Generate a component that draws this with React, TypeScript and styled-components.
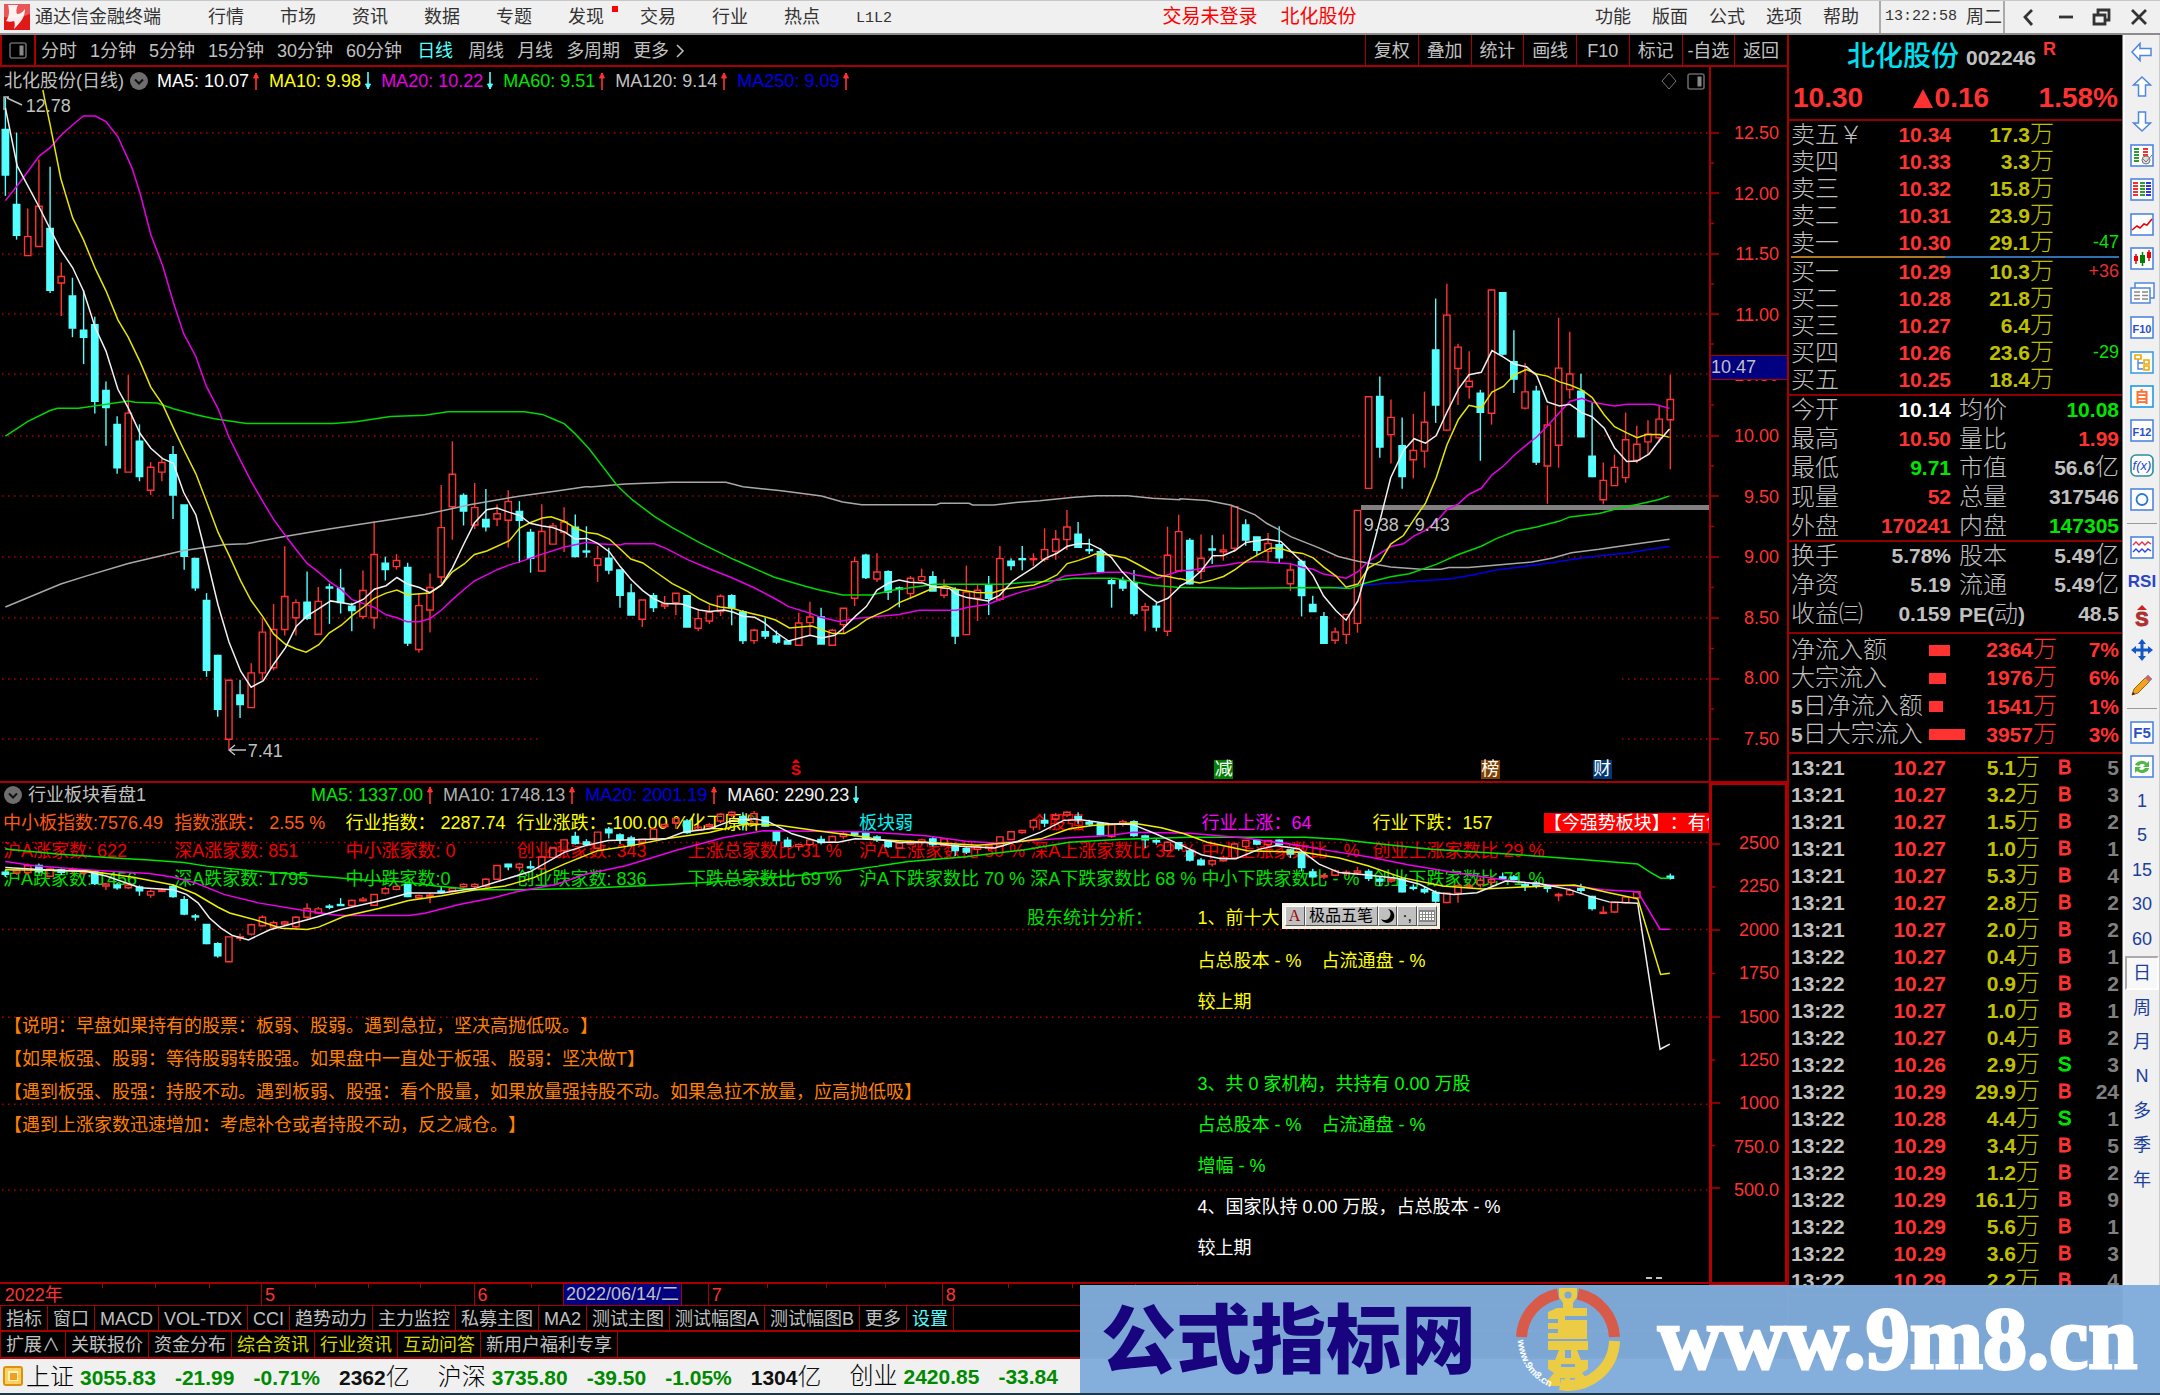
import React from "react";
import styled, { createGlobalStyle, css } from "styled-components";

const RED = "#ff3232";
const CYAN = "#54ffff";
const GREY = "#c0c0c0";
const LINE = "#a80000";
const YELLOW = "#c0c000";
const GREEN = "#00e600";

const Global = createGlobalStyle`
  * { box-sizing: border-box; }
  body {
    margin: 0;
    background: #000;
    color: ${GREY};
    font: 400 18px/20px "Liberation Sans", "Noto Sans CJK SC", sans-serif;
    white-space: nowrap;
    text-spacing-trim: space-all;
  }
  button {
    border: 0;
    padding: 0;
    background: none;
    color: inherit;
    font: inherit;
    cursor: pointer;
  }
  b { font-weight: 700; }
  table { border-collapse: collapse; border-spacing: 0; width: 100%; table-layout: fixed; }
  td, th { padding: 0; font-weight: inherit; text-align: left; }
  svg { display: block; overflow: visible; }
`;

/* ---------- chart data ---------- */

type Candle = [string, number, number, number, number];
type Scale = { x: number; y: number; kx: number; ky: number };

const PITCH = 11.174;
const FIRST = 5.4;

const parse = (s: Scale, text: string): Candle[] =>
  text
    .trim()
    .split(/\s+/)
    .map((row) => {
      const [a, b, c, d] = row.slice(1).split(",").map(Number);
      const f = (v: number) => s.y + v * s.ky;
      return [row[0], f(a), f(b), f(c), f(d)] as Candle;
    });

const path = (s: Scale, text: string) =>
  text
    .trim()
    .split(/\s+/)
    .map((p) => {
      const [x, y] = p.split(",").map(Number);
      return `${(s.x + x * s.kx).toFixed(1)},${(s.y + y * s.ky).toFixed(1)}`;
    })
    .join(" ");

const A: Scale = { x: 0, y: 90, kx: 0.3827, ky: 0.4337 };
const B: Scale = { x: 590, y: 380, kx: 0.3827, ky: 0.3333 };
const C: Scale = { x: 1180, y: 260, kx: 0.3954, ky: 0.3444 };
const D: Scale = { x: 0, y: 770, kx: 0.574, ky: 0.3333 };
const E: Scale = { x: 880, y: 770, kx: 0.574, ky: 0.3333 };

const dayCandles: Candle[] = [
  ...parse(A, `c18,91,196,244 c98,264,335,345 r273,338,382,382 r160,268,361,361 c177,319,462,468 r398,430,445,521
    c433,475,549,570 c462,554,570,632 c523,541,718,746 c672,693,732,820 c752,771,871,885 r657,745,881,881
    c771,810,891,902 r858,870,923,934 r850,859,881,902 c821,841,934,989 c957,957,1075,1106 c1080,1080,1148,1155
    c1160,1177,1338,1353 c1302,1304,1428,1445 r1360,1361,1497,1520 c1360,1395,1417,1448 r1322,1344,1424,1424
    r1218,1250,1344,1360 r1185,1244,1332,1338 r1052,1168,1244,1258 r1174,1182,1217,1258 c1110,1181,1218,1222
    r1146,1179,1255,1255 c1138,1146,1148,1231 c1104,1149,1182,1207 c1182,1190,1200,1248 r1108,1154,1214,1220
    r995,1071,1217,1242 c1076,1091,1106,1131 r1070,1085,1099,1106 c1090,1101,1275,1282 r1160,1189,1290,1297
    r1115,1147,1199,1251 r911,1009,1123,1138 r810,886,961,1037 c930,935,971,1004 r906,963,1003,1012
    c920,990,1007,1018 r956,977,989,1006 r923,949,992,1055 c948,972,992,1090 c1012,1020,1080,1113
    r955,1018,1109,1109 r998,1005,1047,1047 r962,996,1020,1065 c979,1008,1076,1078 c1006,1063,1065,1078`),
  ...parse(B, `r498,536,556,606 c503,535,570,583 c570,570,646,683 c611,639,705,705 r660,660,718,741 c639,647,683,696
    r648,672,678,687 r640,640,668,705 c647,647,741,741 r690,716,745,754 r676,697,723,732 r643,649,695,708
    c643,647,683,736 c690,696,782,792 r746,751,782,792 c714,755,768,777 c752,768,786,792 c783,783,792,792
    r698,729,796,796 r665,711,728,768 c683,711,792,792 r746,751,796,796 r685,685,734,760 r531,545,655,678
    c521,526,593,597 r520,576,597,606 c571,575,636,660 c620,624,626,682 r588,595,641,655 r566,590,602,608
    c574,590,633,633 r598,625,646,655 c622,629,768,792 r557,636,764,764 r614,631,655,723 c588,614,655,705
    r498,536,658,664 c535,544,557,571 c498,536,538,571 r520,536,538,558 r445,509,538,545 r450,478,514,539
    r390,441,479,510 c426,463,502,502 c476,509,512,522 c505,515,575,575 c597,602,611,683 c590,602,624,633
    c570,608,701,707 r670,680,690,754 c668,679,741,754 r440,526,754,768 r404,455,573,575`),
  ...parse(C, `c808,814,940,942 r797,866,904,927 c799,839,842,883 r797,842,847,873 r716,716,837,848 c753,769,813,830
    c804,804,843,857 r793,823,846,875 c773,827,865,880 r880,900,940,961 c870,875,974,1035 c975,1000,1021,1021
    c1022,1036,1113,1115 r1067,1080,1104,1115 r1029,1029,1087,1115 r727,727,1055,1082 r397,397,663,663
    c338,396,543,574 r405,457,507,591 c457,539,629,664 r447,553,580,634 r382,471,555,603 c112,261,421,473
    r69,160,494,497 r243,253,315,421 r265,352,368,403 c377,387,442,583 r85,87,445,478 c94,95,273,277
    c204,295,346,386 r299,383,430,434 c365,381,587,595 r422,479,598,708 r168,314,538,603 r208,331,376,403
    c330,381,513,513 c415,570,629,631 r588,640,696,709 r565,602,655,656 r443,522,632,647 r481,535,581,590
    r465,506,528,563 r424,462,516,530 r333,405,464,608`),
];

const dayLines: [string, string][] = [
  ["#a8a8a8", path(A, "14,1192 159,1139 220,1122 335,1092 480,1062 590,1048 645,1046 740,1030 860,1012 980,996 1110,979 1230,956 1360,936 1450,925 1530,915 1541,915") + " " +
    path(B, "0,321 92,312 212,307 355,307 400,320 500,332 605,348 660,366 710,374 905,374 915,370 990,370 1000,375 1055,375 1120,367 1175,362 1265,352 1325,347 1405,347 1470,355 1541,359") + " " +
    path(C, "0,693 69,698 130,712 190,740 220,765 250,783 280,803 350,835 400,861 450,875 533,891 610,898 660,898 680,893 730,893 810,885 890,877 940,866 990,850 1060,840 1130,828 1238,811")],
  ["#0000e6", path(C, "390,951 430,947 480,943 530,938 600,932 680,926 740,915 800,900 860,891 940,879 990,870 1060,859 1130,851 1190,840 1238,832")],
  ["#00d800", path(A, "14,798 73,764 131,739 150,734 205,734 265,726 335,717 353,720 410,722 453,735 512,749 560,758 645,769 870,769 930,765 1020,753 1110,750 1170,742 1370,742 1417,748 1444,758 1475,770 1503,793 1534,822") + " " +
    path(B, "0,210 72,318 110,359 168,409 215,443 290,490 375,538 480,591 560,618 600,630 660,645 735,645 790,631 900,613 1080,613 1130,608 1190,605 1265,595 1370,595 1400,601 1470,616 1541,623") + " " +
    path(C, "0,951 153,953 380,951 430,954 470,938 533,920 580,911 648,884 704,855 762,831 800,809 850,787 902,775 960,758 986,746 1060,736 1110,721 1130,716 1156,710 1210,696 1238,685")],
  ["#e600e6", path(A, "14,255 45,221 73,188 103,152 131,133 159,105 190,80 218,60 249,60 277,73 308,108 335,160 345,180 366,238 394,333 425,405 453,490 480,562 512,615 539,683 570,735 598,800 629,855 656,902 688,951 715,990 746,1028 774,1060 802,1091 833,1112 860,1133 892,1152 920,1175 978,1193 1009,1210 1037,1217 1064,1226 1096,1226 1123,1219 1154,1199 1182,1175 1213,1151 1240,1132 1272,1118 1299,1106 1331,1095 1358,1088 1417,1070 1475,1054 1534,1043") + " " +
    path(B, "20,491 79,495 90,491 168,491 200,506 255,539 313,567 372,594 430,624 485,657 519,680 575,700 605,713 650,725 695,716 750,710 808,704 860,691 957,691 985,683 1043,672 1085,652 1130,635 1190,616 1240,588 1290,583 1350,577 1400,577 1430,586 1482,595 1540,573") + " " +
    path(C, "0,902 26,902 53,896 83,889 110,887 150,879 180,876 210,876 240,879 280,882 310,893 337,898 363,912 420,924 450,905 477,875 507,851 533,832 565,824 592,801 621,785 648,760 675,725 704,708 731,680 762,663 789,624 818,598 845,567 876,537 902,514 929,482 960,443 986,410 1016,402 1042,413 1099,424 1130,419 1200,419 1238,431")],
  ["#e6e600", path(A, "112,0 116,18 131,80 159,204 190,295 218,345 249,412 277,463 308,530 335,570 366,627 394,685 425,725 453,779 480,829 512,885 539,948 570,1020 598,1072 629,1132 656,1177 688,1216 715,1254 746,1278 774,1289 800,1296 833,1279 860,1252 892,1234 920,1212 950,1192 978,1172 1009,1160 1037,1153 1064,1164 1123,1160 1154,1142 1182,1111 1213,1093 1240,1071 1272,1063 1331,1039 1358,1010 1385,998 1417,987 1440,984 1475,995 1503,1010 1534,1020") + " " +
    path(B, "20,462 51,478 79,507 107,537 138,549 168,573 215,611 255,634 285,656 313,672 340,681 375,686 400,695 450,708 485,720 521,744 580,738 605,749 635,761 665,761 695,741 722,719 750,704 780,689 808,668 850,648 900,623 930,618 957,628 1010,638 1050,639 1085,627 1160,615 1190,602 1220,585 1247,551 1275,542 1305,530 1320,522 1362,525 1400,534 1430,552 1482,585 1510,590 1540,597") + " " +
    path(C, "0,925 26,933 50,938 83,929 110,919 140,898 167,875 195,857 230,836 255,838 280,847 310,852 337,865 363,891 394,917 420,950 450,941 477,894 507,875 533,825 565,800 592,753 621,706 648,632 675,537 704,463 731,422 762,430 789,384 818,367 845,334 876,318 902,331 929,337 960,354 986,363 1016,377 1042,399 1073,450 1099,484 1130,502 1156,516 1180,507 1212,507 1238,515")],
  ["#f0f0f0", path(A, "14,41 45,175 103,271 131,320 159,369 190,410 218,463 249,548 277,602 308,690 335,733 366,792 394,826 425,850 453,861 480,928 512,980 539,1075 570,1188 598,1272 629,1340 656,1377 688,1362 715,1324 746,1286 774,1237 802,1213 833,1196 864,1178 920,1186 950,1174 978,1151 1009,1143 1037,1124 1064,1139 1096,1147 1123,1159 1154,1141 1182,1102 1213,1045 1240,998 1272,968 1299,964 1331,974 1358,981 1385,999 1417,1005 1444,1009 1475,1019 1503,1035 1534,1034") + " " +
    path(B, "20,490 51,516 79,560 107,598 138,632 168,657 195,671 240,672 285,690 313,695 350,690 375,697 400,709 430,712 455,728 485,756 519,783 575,766 605,774 640,766 662,745 695,707 722,680 750,630 780,609 808,600 835,607 870,609 900,621 940,626 957,642 985,653 1040,663 1070,646 1105,603 1160,562 1190,535 1220,520 1247,499 1275,491 1305,491 1335,508 1362,532 1390,575 1420,610 1450,640 1482,668 1510,655 1540,622") + " " +
    path(C, "0,947 26,930 53,903 83,859 110,858 140,843 167,820 220,811 255,817 280,845 310,878 337,917 363,975 394,1018 420,1046 450,990 477,880 507,750 533,632 565,554 592,519 621,532 648,510 675,442 704,375 731,333 762,326 789,263 818,282 845,302 876,310 902,335 929,412 960,424 986,419 1016,443 1042,455 1073,488 1099,545 1130,585 1156,584 1186,564 1212,525 1238,491")],
];

const sectorCandles: Candle[] = [
  ...parse(D, `c298,304,310,318 r296,300,306,312 r278,285,305,312 c278,284,303,308 r290,294,316,318 c292,297,304,312
    r290,296,300,310 r296,300,305,315 c300,303,338,342 r335,339,345,357 c335,342,350,356 r336,342,350,354
    c343,348,359,374 r356,361,372,380 r352,358,361,363 c340,346,376,380 c375,386,428,432 c428,434,436,448
    c458,459,516,518 c512,516,552,558 r494,496,570,571 r486,496,500,508 r457,460,488,492 r432,438,463,466
    r448,454,467,471 r449,452,458,463 r435,438,466,471 r396,412,438,442 r407,413,425,427 c399,405,408,414
    c381,400,403,404 r385,388,403,406 r378,384,389,391 r369,370,402,404 r347,353,366,370 r343,346,355,358
    c338,341,376,378 r370,374,380,383 r366,372,376,396 c346,360,364,368 r349,352,359,364 r337,340,347,350
    r337,340,346,350 r322,325,345,350 r283,284,325,327 c279,280,288,298 r276,280,290,301 c270,288,290,296
    r257,259,294,296 r230,232,260,262 r207,208,240,243 c184,198,218,222 c206,214,222,226 r184,185,233,236
    c170,176,187,204 c188,193,207,220 c196,202,224,228 r203,206,215,220 r174,176,204,207 r159,162,168,172
    r140,144,158,176 c146,152,186,190 r162,170,178,182 r158,163,168,172 r128,132,152,158 r124,126,134,140
    c126,138,160,180 r122,130,160,165 c138,140,167,169 c180,184,210,222 c200,209,227,230 r218,222,228,240
    r205,208,222,226 c196,207,216,222 r196,198,214,217 r185,190,198,206 c182,187,192,198 c185,188,204,208
    c194,199,208,214 c210,213,228,232 r215,218,232,233 r208,212,220,224 r204,208,214,222 c200,205,222,228
    r203,205,225,228 c222,224,240,256 c230,234,244,250 r222,228,236,248 r222,226,232,238 r198,199,227,230
    r184,184,207,209 r178,180,186,190 r145,150,170,180 c130,150,158,170 r128,135,146,150 r124,126,134,140
    c126,138,146,160 c148,156,161,166 c158,160,193,195 r160,163,198,202 r148,154,162,168 c150,154,195,199
    c193,196,208,232 c206,210,214,222 r212,215,240,243 c214,216,234,240 c238,241,268,272 c262,268,282,284
    r266,270,280,287 r255,260,270,272 r215,220,262,265 r208,210,228,232 c208,210,220,224 r208,210,222,230
    c207,209,222,225 c235,238,250,262 c242,245,290,302 c294,303,318,320 r308,314,318,324 r295,300,313,316
    r298,304,308,315 r288,300,305,312 c295,302,322,330 c318,325,330,345 r320,325,330,335 c322,324,362,364
    c340,349,352,358 c347,355,362,368 c358,364,390,395 r364,366,394,396 r340,344,366,395 r338,344,348,352
    r320,328,340,350 r320,326,334,350 c305,318,322,328 c312,318,326,334 c336,340,346,360 c330,336,346,352
    c340,344,352,364 r365,370,374,390 r352,358,370,374 c338,352,358,369 c374,376,412,418 r405,423,425,426
    r393,394,422,424 r374,378,395,398 r360,362,380,384 x0,0,0,0 x0,0,0,0 c308,316,322,326`),
];

const sectorLines: [string, string][] = [
  ["#00e600", path(D, "9,235 100,250 200,262 260,268 320,275 360,286 440,300 530,312 640,328 700,332 760,345 830,356 900,356 1020,352 1140,343 1250,332 1400,312 1480,298 1530,286") + " " +
    path(E, "0,285 50,272 150,258 250,238 330,215 420,206 540,200 740,200 800,206 860,218 960,236 1080,248 1200,263 1320,280 1340,302 1360,322 1376,322")],
  ["#f000f0", path(D, "9,272 60,285 150,297 260,308 300,318 340,335 390,370 450,395 530,418 590,433 712,433 740,426 800,400 860,380 900,362 970,340 1020,310 1090,285 1180,238 1260,202 1330,181 1500,184") + " " +
    path(E, "0,187 80,196 150,212 200,217 260,211 330,202 400,195 440,185 540,188 640,203 720,222 790,242 850,258 920,282 1000,305 1080,325 1150,340 1210,345 1260,356 1320,362 1359,473 1376,473")],
  ["#f0f000", path(D, "9,297 150,300 185,308 230,318 302,342 340,368 380,408 400,425 450,448 490,470 535,474 555,467 600,435 660,412 712,388 770,374 828,356 880,345 930,320 983,280 1041,240 1100,225 1160,205 1236,186 1300,160 1360,165 1430,182 1510,200") + " " +
    path(E, "0,208 80,215 170,224 230,216 280,205 330,175 370,165 440,158 490,172 530,190 570,215 640,240 740,245 800,262 850,285 910,320 980,345 1050,354 1120,348 1210,342 1270,365 1320,383 1360,608 1376,604")],
  ["#f0f0f0", path(D, "9,290 68,296 150,302 185,315 244,350 302,356 325,370 345,395 365,440 385,470 405,492 433,505 470,475 535,445 594,415 672,385 712,366 770,366 828,352 870,330 924,302 983,245 1020,225 1060,210 1160,205 1190,185 1236,175 1276,150 1315,145 1340,155 1380,190 1430,215 1460,215 1490,205") + " " +
    path(E, "0,208 35,216 80,216 133,226 200,232 240,212 280,185 320,150 350,148 400,160 440,162 480,190 520,220 560,252 595,264 620,264 660,236 690,225 730,235 765,280 800,305 850,312 900,322 940,340 970,365 1000,370 1040,365 1090,330 1150,338 1200,355 1240,378 1270,392 1320,396 1359,830 1376,815")],
];

const dayGrid = [133, 193, 254, 314, 374, 436, 496, 557, 618, 679, 739];
const sectorGrid = [842, 928, 1015, 1101, 1186];

/* ---------- page frame ---------- */

const Page = styled.div`
  min-height: 100vh;
  display: flex;
  flex-direction: column;
  position: relative;
  overflow: hidden;
`;

const MenuBar = styled.header`
  height: 35px;
  display: flex;
  align-items: center;
  padding: 0 10px 0 4px;
  background: #f0f0f0;
  border-top: 1px solid #c8c8c8;
  border-bottom: 2px solid #8c8c8c;
  color: #333;
`;

const Title = styled.div`
  display: flex;
  align-items: center;
  gap: 5px;
  width: 204px;
`;

const Menu = styled.nav<{ $gap: number }>`
  display: flex;
  gap: ${(p) => p.$gap}px;
`;

const MenuItem = styled.button<{ $dot?: boolean }>`
  position: relative;
  min-width: 36px;
  ${(p) =>
    p.$dot &&
    css`
      &::after {
        content: "";
        position: absolute;
        right: -14px;
        top: 0;
        width: 6px;
        height: 6px;
        background: #f00;
      }
    `}
`;

const Mono = styled.span`
  font-family: "Liberation Mono", "Noto Sans CJK SC", monospace;
  font-size: 15px;
`;

const Notice = styled.div`
  flex: 1;
  display: flex;
  justify-content: center;
  gap: 23px;
  color: #f00;
  font-size: 19px;
  padding-left: 32px;
`;

const Clock = styled.div`
  display: flex;
  align-items: center;
  gap: 9px;
  height: 32px;
  margin-left: 20px;
  padding: 0 4px;
  border-left: 2px solid #aaa;
  border-right: 2px solid #aaa;
  width: 126px;
`;

const WindowButtons = styled.div`
  display: flex;
  align-items: center;
  justify-content: space-between;
  width: 132px;
  margin-left: 13px;
`;

const Body = styled.div`
  flex: 1;
  display: grid;
  grid-template-columns: minmax(0, 1fr) 336px 37px;
  min-height: 0;
`;

const Main = styled.main`
  display: flex;
  flex-direction: column;
  min-width: 0;
`;

const Toolbar = styled.div`
  height: 32px;
  display: flex;
  border-bottom: 2px solid ${LINE};
`;

const PaneToggle = styled.button`
  width: 36px;
  display: grid;
  place-items: center;
  border-left: 2px solid ${LINE};
  border-right: 2px solid ${LINE};
  margin-right: 5px;
`;

const Periods = styled.div`
  flex: 1;
  display: flex;
  align-items: center;
  gap: 13px;
  padding-top: 2px;
`;

const Period = styled.button<{ $on?: boolean }>`
  display: flex;
  align-items: center;
  gap: 7px;
  color: ${(p) => (p.$on ? CYAN : "inherit")};
  padding: 0 ${(p) => (p.$on ? 2 : 0)}px;
`;

const Tools = styled.div`
  display: grid;
  grid-template-columns: repeat(8, 1fr);
  width: 422px;
  button {
    border-left: 1px solid ${LINE};
    padding-top: 2px;
  }
`;

/* ---------- chart panes ---------- */

const Pane = styled.section<{ $h: number; $line?: boolean }>`
  flex: ${(p) => p.$h} 1 ${(p) => p.$h}px;
  min-height: 0;
  display: grid;
  grid-template-columns: minmax(0, 1fr) 78px;
  ${(p) => p.$line && `border-top: 2px solid ${LINE};`}
`;

const Canvas = styled.div`
  position: relative;
  display: grid;
  grid-template-rows: 100%;
  min-height: 0;
  overflow: hidden;
  > * {
    grid-area: 1 / 1;
    min-width: 0;
    min-height: 0;
  }
`;

const Plot = styled.svg`
  width: 100%;
  height: 100%;
  pointer-events: none;
  polyline,
  line,
  rect {
    vector-effect: non-scaling-stroke;
  }
`;

const Legend = styled.div<{ $h: number }>`
  display: flex;
  align-items: center;
  align-self: start;
  width: 100%;
  height: ${(p) => p.$h}px;
  padding-left: 4px;
`;

const LegendName = styled.button<{ $w?: number }>`
  display: flex;
  align-items: center;
  gap: 6px;
  ${(p) => p.$w && `width: ${p.$w}px;`}
`;

const LegendItem = styled.span<{ $c: string }>`
  display: flex;
  align-items: center;
  gap: 3px;
  width: max-content;
  margin-left: 9px;
  color: ${(p) => p.$c};
`;

const Corner = styled.div`
  display: flex;
  align-items: center;
  gap: 10px;
  margin-left: auto;
  padding-right: 4px;
`;

const Axis = styled.div<{ $top: number; $bottom: number; $frame?: boolean }>`
  position: relative;
  border-left: 2px solid ${LINE};
  display: grid;
  ${(p) => p.$frame && `border: 3px solid #b40000; border-top-width: 2px; border-right-width: 2px;`}
  > * {
    grid-area: 1 / 1;
  }
  ol {
    list-style: none;
    margin: 0;
    padding: ${(p) => p.$top}px ${(p) => (p.$frame ? 6 : 8)}px ${(p) => p.$bottom}px 0;
    display: flex;
    flex-direction: column;
    justify-content: space-between;
    text-align: right;
    color: ${RED};
  }
`;

const CursorPrice = styled.div`
  position: absolute;
  top: 288px;
  left: 0;
  right: 0;
  height: 25px;
  background: #000080;
  border-top: 1px solid ${LINE};
  border-bottom: 1px solid ${LINE};
  line-height: 22px;
`;

const Pin = styled.span<{ $x: number; $y: number; $bg?: string }>`
  position: absolute;
  left: ${(p) => p.$x}%;
  top: ${(p) => p.$y}%;
  ${(p) =>
    p.$bg &&
    css`
      background: ${p.$bg};
      color: #fff;
      width: 19px;
      height: 19px;
      line-height: 19px;
      text-align: center;
    `}
`;

const StatGrid = styled.div`
  display: grid;
  grid-template-columns: repeat(10, 1fr);
  grid-auto-rows: 28px;
  align-items: center;
  padding: 2px 0 0 3px;
  margin-right: -6px;
`;

const Cell = styled.span<{ $c: string; $fill?: boolean }>`
  color: ${(p) => p.$c};
  white-space: pre;
  width: 0;
  ${(p) =>
    p.$fill &&
    css`
      width: 100%;
      overflow: hidden;
      background: #f00;
    `}
`;

const Overlay = styled.div`
  display: flex;
  flex-direction: column;
`;

const Notes = styled.div`
  display: grid;
  grid-template-columns: 60% 10% 30%;
  line-height: 41px;
  padding-left: 4px;
  padding-top: 5px;
`;

const Advice = styled.div`
  margin-top: 112px;
  line-height: 33px;
  color: #ff8000;
`;

const Holder = styled.div<{ $c: string }>`
  color: ${(p) => p.$c};
  min-height: 41px;
  white-space: pre;
  &:first-child {
    padding-bottom: 2px;
  }
`;

const Ime = styled.div`
  position: absolute;
  left: 75%;
  top: 120px;
  width: 158px;
  height: 26px;
  display: flex;
  border: 3px solid #f4f2e2;
  background: #c0c0c0;
  color: #000;
`;

const ImeKey = styled.button<{ $grow?: number; $latin?: boolean }>`
  display: grid;
  place-items: center;
  border: 1px solid;
  border-color: #fff #555 #555 #fff;
  flex: ${(p) => p.$grow || 1};
  line-height: 18px;
  font-size: 16px;
  ${(p) => p.$latin && `color: #a00000; font-family: "Liberation Serif", serif;`}
`;

const DateAxis = styled.div`
  position: relative;
  height: 24px;
  border-top: 2px solid ${LINE};
  border-bottom: 1px solid ${LINE};
  color: ${RED};
  line-height: 22px;
`;

const DateMark = styled.span<{ $x: number; $line?: boolean; $box?: boolean }>`
  position: absolute;
  left: ${(p) => p.$x}%;
  top: 0;
  bottom: 0;
  padding-left: 3px;
  ${(p) => p.$line && `border-left: 1px solid ${LINE};`}
  ${(p) => p.$box && `background: #000080; color: ${GREY}; padding: 0 2px; border: 1px solid ${LINE}; border-width: 0 1px; line-height: 20px;`}
`;

const Tick = styled.i<{ $x: number }>`
  position: absolute;
  left: ${(p) => p.$x}%;
  top: 0;
  height: 4px;
  border-left: 1px solid ${LINE};
`;

const Tabs = styled.div<{ $h: number }>`
  height: ${(p) => p.$h}px;
  display: flex;
  border-bottom: 2px solid ${LINE};
  border-left: 1px solid ${LINE};
`;

const Tab = styled.button<{ $c?: string }>`
  padding: 1px 5px 0;
  border-right: 1px solid ${LINE};
  color: ${(p) => p.$c || "inherit"};
`;

/* ---------- quote panel ---------- */

const Quote = styled.aside`
  border-left: 2px solid ${LINE};
  border-right: 1px solid #808080;
  height: 100%;
  overflow: hidden;
  font-size: 24px;
  font-weight: 300;
  display: flex;
  flex-direction: column;
`;

const Block = styled.div<{ $top?: number; $pad: number }>`
  padding: ${(p) => p.$top || 0}px 3px ${(p) => p.$pad}px 2px;
  border-bottom: 2px solid #900000;
`;

const Head = styled.div`
  height: 86px;
  border-bottom: 2px solid #900000;
  padding: 4px 4px 0;
`;

const Name = styled.div`
  display: flex;
  align-items: center;
  justify-content: center;
  gap: 7px;
  height: 36px;
  padding-right: 8px;
  strong {
    font-size: 28px;
    color: #00e0f0;
    font-weight: 500;
  }
  b {
    font-size: 21px;
    padding-top: 2px;
  }
  sup {
    font-size: 18px;
    font-weight: bold;
    color: ${RED};
    align-self: flex-start;
    line-height: 20px;
    vertical-align: top;
  }
`;

const Price = styled.div`
  display: flex;
  justify-content: space-between;
  color: ${RED};
  font-size: 28px;
  font-weight: bold;
  line-height: 46px;
  span {
    display: flex;
    align-items: center;
    gap: 2px;
  }
`;

const Small = styled.b`
  font-size: 21px;
`;

const Col = styled.col<{ $w?: number }>`
  width: ${(p) => (p.$w ? p.$w + "px" : "auto")};
`;

const Row = styled.tr<{ $h: number }>`
  height: ${(p) => p.$h}px;
  line-height: ${(p) => p.$h}px;
`;

const Num = styled.td<{ $c?: string; $thin?: boolean; $left?: boolean }>`
  && {
    text-align: ${(p) => (p.$left ? "left" : "right")};
    font-weight: ${(p) => (p.$thin ? 400 : 700)};
  }
  color: ${(p) => p.$c || GREY};
  font-size: ${(p) => (p.$thin ? 18 : 21)}px;
  i {
    font: 300 24px "Noto Sans CJK SC", sans-serif;
    line-height: 20px;
  }
`;

const Side = styled.td<{ $c: string }>`
  && {
    padding-left: 18px;
  }
  color: ${(p) => p.$c};
  font-size: 20px;
  font-weight: 400;
  -webkit-text-stroke: 1px ${(p) => p.$c};
`;

const Balance = styled.div`
  height: 2px;
  background: linear-gradient(90deg, #b07820 47%, #3070b0 47%);
`;

const Stats = styled.div<{ $gap: number }>`
  display: grid;
  row-gap: ${(p) => p.$gap}px;
`;

const StatRow = styled.dl`
  margin: 0;
  height: 28px;
  line-height: 28px;
  display: grid;
  grid-template-columns: 72px 88px 80px 88px;
  dt {
    white-space: nowrap;
  }
  dt:nth-of-type(2) {
    padding-left: 8px;
  }
`;

const Value = styled.dd<{ $c?: string }>`
  margin: 0;
  text-align: right;
  font-size: 21px;
  font-weight: 700;
  color: ${(p) => p.$c || GREY};
  i {
    font: 300 24px "Noto Sans CJK SC", sans-serif;
    line-height: 20px;
  }
`;

const FlowRow = styled.div`
  height: 28px;
  line-height: 28px;
  display: grid;
  grid-template-columns: 138px 38px 1fr 62px;
  align-items: center;
`;

const Bar = styled.span`
  height: 11px;
  background: ${RED};
`;

/* ---------- side tools ---------- */

const Rail = styled.div`
  background: #f0f0f0;
  border-left: 2px solid #fafafa;
  border-right: 1px solid #ccc;
`;

const RailGroup = styled.div<{ $h: number }>`
  height: ${(p) => p.$h}px;
  display: grid;
  grid-auto-rows: 1fr;
`;

const RailSep = styled.hr`
  margin: 6px 2px;
  height: 1px;
  border: 0;
  background: #999;
`;

const RailButton = styled.button<{ $on?: boolean }>`
  display: grid;
  place-items: center;
  color: #1a3f9c;
  ${(p) => p.$on && `border: 2px solid; border-color: #aaa #fff #fff #aaa; background: #f8f8f8;`}
`;

const Rsi = styled.b`
  font-size: 17px;
  color: #2a44c8;
`;

/* ---------- bottom ---------- */

const Status = styled.footer`
  height: 36px;
  display: flex;
  align-items: center;
  padding-left: 3px;
  background: #f0f0f0;
  border-bottom: 2px solid #1d3a4c;
  color: #000;
  font-size: 24px;
`;

const Index = styled.div`
  display: flex;
  align-items: baseline;
  gap: 19px;
  margin: 0 25px 0 3px;
  font-size: 21px;
  font-weight: 700;
  color: #008a00;
  span:first-child {
    font-size: 24px;
    font-weight: 300;
    color: #000;
    margin-right: -13px;
  }
  em {
    color: #111;
    font-style: normal;
  }
  i {
    font: 300 24px "Noto Sans CJK SC", sans-serif;
    line-height: 20px;
  }
`;

const Banner = styled.div`
  position: absolute;
  right: 0;
  bottom: 2px;
  width: 1080px;
  height: 108px;
  display: flex;
  align-items: center;
  padding-left: 21px;
  background: rgba(128, 172, 220, 0.97);
`;

const BannerName = styled.div`
  width: 414px;
  padding-bottom: 8px;
  font: 900 75px/100px "Noto Sans CJK SC", sans-serif;
  color: #17047e;
`;

const BannerUrl = styled.a`
  margin-left: 37px;
  font: bold 88px/90px "Liberation Serif", serif;
  color: #fff;
  -webkit-text-stroke: 3px #fff;
  text-decoration: none;
`;

/* ---------- drawings ---------- */

const Candles = ({ data }: { data: Candle[] }) => (
  <g strokeWidth={1.4}>
    {data.map(([k, hi, top, bot, lo], i) => {
      if (k === "x") return null;
      const x = FIRST + PITCH * i;
      const c = k === "c" ? CYAN : RED;
      const h = Math.max(bot - top, 1);
      return (
        <g key={i} stroke={c} fill={k === "c" ? CYAN : "#000"}>
          <line x1={x} x2={x} y1={hi} y2={top} />
          <line x1={x} x2={x} y1={bot} y2={lo} />
          <rect x={x - 3.2} y={top} width={6.4} height={h} fillOpacity={k === "c" ? 1 : 0.5} />
        </g>
      );
    })}
  </g>
);

const Lines = ({ data }: { data: [string, string][] }) => (
  <g fill="none" strokeWidth={1.5}>
    {data.map(([c, p], i) => (
      <polyline key={i} points={p} stroke={c} />
    ))}
  </g>
);

const Grid = ({ ys }: { ys: number[] }) => (
  <g stroke="#b00000" strokeWidth={1.5} strokeDasharray="1.5 4.5">
    {ys.map((y) => (
      <line key={y} x1={2} x2={1709} y1={y} y2={y} />
    ))}
  </g>
);

const Ticks = ({ ys, view }: { ys: number[]; view: string }) => (
  <svg viewBox={view} width="10" height="100%" preserveAspectRatio="none">
    {ys.map((y, i) => (
      <g key={y} stroke="#b40000" strokeWidth="1.5">
        <line x1="0" x2="8" y1={y} y2={y} />
        {ys[i + 1] && <line x1="0" x2="3" y1={(y + ys[i + 1]) / 2} y2={(y + ys[i + 1]) / 2} />}
      </g>
    ))}
  </svg>
);

const Arrow = ({ up }: { up?: boolean }) => (
  <svg width="8" height="20" viewBox="0 0 8 20">
    <g stroke={up ? RED : CYAN} fill={up ? RED : CYAN} transform={up ? "" : "rotate(180 4 10)"}>
      <path d="M4 2v17" strokeWidth="1.6" />
      <path d="M4 2L1.5 7h5z" />
    </g>
  </svg>
);

const Drop = () => (
  <svg width="18" height="18" viewBox="0 0 18 18">
    <circle cx="9" cy="9" r="9" fill="#6e6e6e" />
    <path d="M5 7.5l4 4 4-4" fill="none" stroke="#111" strokeWidth="2" />
  </svg>
);

const PaneIcon = () => (
  <svg width="18" height="17" viewBox="0 0 18 17">
    <rect x="1" y="1" width="16" height="15" rx="2" fill="none" stroke="#666" strokeWidth="1.6" />
    <rect x="10.5" y="3.5" width="4" height="10" fill="#888" />
  </svg>
);

const Box = ({ children, c = "#4f86e0" }: { children?: React.ReactNode; c?: string }) => (
  <svg width="24" height="23" viewBox="0 0 24 23">
    <rect x="1" y="1" width="22" height="21" fill="#fff" stroke={c} strokeWidth="1.6" />
    {children}
  </svg>
);

const dashes = (x: number, c: string, n: number, gap: number) =>
  Array.from({ length: n }, (_, i) => <path key={x + "-" + i} d={`M${x} ${5 + i * gap}h5`} stroke={c} strokeWidth="1.6" />);

const BigArrow = ({ turn }: { turn: number }) => (
  <svg width="24" height="24" viewBox="0 0 24 24">
    <path d="M2 12L10 3.5v5h11v7H10v5z" fill="#fff" stroke="#4f86e0" strokeWidth="1.5" transform={`rotate(${turn} 12 12)`} />
  </svg>
);

const label = (t: string) => (
  <Box>
    <text x="12" y="17" fontSize={t.length > 2 ? 11 : 15} fontWeight="bold" textAnchor="middle" fill="#2a50c8">
      {t}
    </text>
  </Box>
);

const topTools: [string, React.ReactNode][] = [
  ["后退", <BigArrow turn={0} />],
  ["上翻", <BigArrow turn={90} />],
  ["下翻", <BigArrow turn={270} />],
  ["自选报价", <Box>{dashes(4, "#008000", 5, 3)}{dashes(13, "#e00", 3, 3)}<circle cx="16" cy="16" r="4" fill="#ddd" stroke="#777" /><path d="M13 15l3 3 6-7" fill="none" stroke="#777" /></Box>],
  ["行情列表", <Box>{dashes(3, "#e00", 5, 3)}{dashes(10, "#008000", 5, 3)}{dashes(16, "#00c", 5, 3)}</Box>],
  ["分时图", <Box><path d="M2 17l5-4 3 2 4-4 3 1 5-6" fill="none" stroke="#e00" strokeWidth="1.6" /></Box>],
  ["K线图", <Box><path d="M6 7v10M19 3v11" stroke="#e00" strokeWidth="1.5" /><path d="M12.5 5v14" stroke="#008000" strokeWidth="1.5" /><path d="M4 9h4v5H4zM17 5h4v6h-4z" fill="#e00" /><path d="M10 8h5v8h-5z" fill="#008000" /></Box>],
  ["多窗口", <svg width="25" height="23" viewBox="0 0 25 23"><rect x="5" y="1" width="19" height="15" fill="#fff" stroke="#4f86e0" strokeWidth="1.5" /><rect x="1" y="6" width="19" height="15" fill="#fff" stroke="#4f86e0" strokeWidth="1.5" />{[10, 13.5, 17].map((y) => <path key={y} d={`M4 ${y}h6M12 ${y}h6`} stroke="#888" strokeWidth="1.5" />)}</svg>],
  ["F10", label("F10")],
  ["结构树", <Box c="#3ba0e0"><path d="M8 7v11h5M8 12h5" fill="none" stroke="#4f86e0" strokeWidth="1.4" /><path d="M5 4h6v4H5zM14 9h5v4h-5zM14 15h5v4h-5z" fill="#fff" stroke="#f0a800" strokeWidth="1.6" /></Box>],
  ["自选", <Box c="#1e9be0"><text x="12" y="17" fontSize="15" fontWeight="bold" textAnchor="middle" fill="#ff7030">自</text></Box>],
  ["F12", label("F12")],
  ["公式", <svg width="24" height="23" viewBox="0 0 24 23"><rect x="1" y="1" width="22" height="21" rx="5" fill="#fff" stroke="#2a8f98" strokeWidth="1.6" /><text x="12" y="16" fontSize="13" fontStyle="italic" textAnchor="middle" fill="#2048d0">f(x)</text></svg>],
  ["圈选", <Box><circle cx="12" cy="11.5" r="5.5" fill="none" stroke="#2a78d0" strokeWidth="1.8" /></Box>],
];

const midTools: [string, React.ReactNode][] = [
  ["指标", <Box>{[9, 16].map((y) => <path key={y} d={`M3 ${y}l3-3 3 3 3-3 3 3 3-3 3 2`} fill="none" stroke={y > 9 ? "#3040e0" : "#e03050"} strokeWidth="1.4" />)}</Box>],
  ["RSI", <Rsi>RSI</Rsi>],
  ["特色", <svg width="20" height="24" viewBox="0 0 20 24"><path d="M5 6l5-5 5 5z" fill="#d02020" /><text x="10" y="22" fontSize="20" fontWeight="bold" textAnchor="middle" fill="#b03030" stroke="#b03030">S</text></svg>],
  ["移动", <svg width="24" height="24" viewBox="0 0 24 24"><path d="M12 1l4 5h-2.5v4.500H18V8l5 4-5 4v-2.500h-4.500V18H16l-4 5-4-5h2.500v-4.500H6V16l-5-4 5-4v2.500h4.500V6H8z" fill="#1458c8" /></svg>],
  ["画笔", <svg width="24" height="24" viewBox="0 0 24 24"><path d="M2 22l2-6L15 5l4 4L8 20z" fill="#f2a320" stroke="#a06010" /><path d="M15 5l3-3 4 4-3 3z" fill="#d86060" stroke="#999" /><path d="M2 22l1-3 2 2z" fill="#222" /></svg>],
];

const lowTools: [string, React.ReactNode][] = [
  ["F5", label("F5")],
  ["刷新", <Box><path d="M5 10a7 6 0 0 1 12-2l2-2v6h-6l2-2a4 4 0 0 0-6 1zM19 13a7 6 0 0 1-12 3l-2 2v-6h6l-2 2a4 4 0 0 0 6-1z" fill="#4fb848" /></Box>],
  ..."1 5 15 30 60 日 周 月 N 多 季 年".split(" ").map((t) => [t, t] as [string, React.ReactNode]),
];

const trades = `13:21 10.27 5.1 B 5
13:21 10.27 3.2 B 3
13:21 10.27 1.5 B 2
13:21 10.27 1.0 B 1
13:21 10.27 5.3 B 4
13:21 10.27 2.8 B 2
13:21 10.27 2.0 B 2
13:22 10.27 0.4 B 1
13:22 10.27 0.9 B 2
13:22 10.27 1.0 B 1
13:22 10.27 0.4 B 2
13:22 10.26 2.9 S 3
13:22 10.29 29.9 B 24
13:22 10.28 4.4 S 1
13:22 10.29 3.4 B 5
13:22 10.29 1.2 B 2
13:22 10.29 16.1 B 9
13:22 10.29 5.6 B 1
13:22 10.29 3.6 B 3
13:22 10.29 2.2 B 4`
  .split("\n")
  .map((r) => r.split(" "));

type Depth = [string, string, string, string?];
const sells: Depth[] = [
  ["卖五￥", "10.34", "17.3"],
  ["卖四", "10.33", "3.3"],
  ["卖三", "10.32", "15.8"],
  ["卖二", "10.31", "23.9"],
  ["卖一", "10.30", "29.1", "-47"],
];
const buys: Depth[] = [
  ["买一", "10.29", "10.3", "+36"],
  ["买二", "10.28", "21.8"],
  ["买三", "10.27", "6.4"],
  ["买四", "10.26", "23.6", "-29"],
  ["买五", "10.25", "18.4"],
];

const DepthTable = ({ rows }: { rows: Depth[] }) => (
  <table>
    <colgroup>
      <Col $w={76} />
      <Col $w={84} />
      <Col $w={103} />
      <Col />
    </colgroup>
    <tbody>
      {rows.map(([n, p, v, d]) => (
        <Row key={n} $h={27}>
          <th scope="row">{n}</th>
          <Num $c={RED}>{p}</Num>
          <Num $c={YELLOW}>
            {v}
            <i>万</i>
          </Num>
          <Num $thin $c={d && d[0] === "+" ? "#e03030" : GREEN}>
            {d}
          </Num>
        </Row>
      ))}
    </tbody>
  </table>
);

type Stat = [string, string, string?, string?];
const StatPair = ({ a, b }: { a: Stat; b: Stat }) => (
  <StatRow>
    {[a, b].map(([n, v, c, u]) => (
      <React.Fragment key={n}>
        <dt>{n === "PE(动)" ? <><Small>PE(</Small>动<Small>)</Small></> : n}</dt>
        <Value $c={c}>
          {v}
          {u && <i>{u}</i>}
        </Value>
      </React.Fragment>
    ))}
  </StatRow>
);

const O = "#ff5a14";
const Y = "#ffff00";
const R = "#f00000";
const G = "#00e000";
const stats: [string, string][] = [
  ["中小板指数:7576.49", O], ["指数涨跌： 2.55 %", O], ["行业指数： 2287.74", Y], ["行业涨跌：-100.00 %", Y], ["化工原料", Y],
  ["板块弱", "#00f0f0"], ["个股强", "#f00"], ["行业上涨：64", "#f0f"], ["行业下跌：157", Y], ["【今强势板块】：有色", "#fff"],
  ["沪A涨家数: 622", R], ["深A涨家数: 851", R], ["中小涨家数: 0", R], ["创业涨家数: 343", R], ["上涨总家数比 31 %", R],
  ["沪A上涨家数比 30 %", R], ["深A上涨家数比 32 %", R], ["中小上涨家数比 - %", R], ["创业上涨家数比 29 %", R], ["", R],
  ["沪A跌家数: 1456", G], ["深A跌家数: 1795", G], ["中小跌家数:0", G], ["创业跌家数: 836", G], ["下跌总家数比 69 %", G],
  ["沪A下跌家数比 70 %", G], ["深A下跌家数比 68 %", G], ["中小下跌家数比 - %", G], ["创业下跌家数比 71 %", G], ["", G],
];

const holders: [string, string][] = [
  ["1、前十大", Y],
  ["占总股本 - %    占流通盘 - %", Y],
  ["较上期", Y],
  ["", Y],
  ["3、共 0 家机构，共持有 0.00 万股", "#00ff00"],
  ["占总股本 - %    占流通盘 - %", "#00ff00"],
  ["增幅 - %", "#00ff00"],
  ["4、国家队持 0.00 万股，占总股本 - %", "#fff"],
  ["较上期", "#fff"],
];

const advice = [
  "【说明：早盘如果持有的股票：板弱、股弱。遇到急拉，坚决高抛低吸。】",
  "【如果板强、股弱：等待股弱转股强。如果盘中一直处于板强、股弱：坚决做T】",
  "【遇到板强、股强：持股不动。遇到板弱、股强：看个股量，如果放量强持股不动。如果急拉不放量，应高抛低吸】",
  "【遇到上涨家数迅速增加：考虑补仓或者持股不动，反之减仓。】",
];

const Coin = () => (
  <svg width="106" height="106" viewBox="0 0 106 106">
    <g fill="none" strokeWidth="11">
      <path d="M6.5 51A46 46 0 0 1 43 8" stroke="#d85a48" />
      <path d="M63 8a46 46 0 0 1 36.5 43" stroke="#d85a48" />
      <path d="M99.5 55A46 46 0 0 1 45 98.5" stroke="#eccb45" />
    </g>
    <path d="M44 2h18v9l-4 6v5h14v8h-22v4h22v19H33v-6h10v-4H33v-6h10v-4H33v-7l9-4h6v-5l-4-6z" fill="#eccb45" />
    <circle cx="53" cy="9" r="3.5" fill="#7ca8d8" />
    <path d="M33 55h40v9H62l4 10h7v9l-6 4 6 7v6H60v-8h-5v13h-5V92h-5v8H33v-6l6-7-6-4v-9h7l4-10H33z" fill="#eccb45" />
    <path d="M50 64h6v8h-6zM46 78h14v3H46z" fill="#7ca8d8" />
    <path id="coinArc" d="M3 54A52 52 0 0 0 46 104" fill="none" />
    <text fontSize="10" fontWeight="bold" fill="#fff">
      <textPath href="#coinArc">www.9m8.cn</textPath>
    </text>
  </svg>
);

export default function App() {
  return (
    <Page>
      <Global />
      <MenuBar>
        <Title>
          <svg width="26" height="26" viewBox="0 0 26 26">
            <rect width="26" height="26" fill="#e01818" />
            <path d="M0 0h26v10Q12 16 0 13z" fill="#f08080" opacity=".6" />
            <path d="M4 1h10c-2 4-2 7-1 9 3 0 6-2 8-5 0 8-4 13-11 20 1-4 1-6 0-8-3 1-5 1-8 0 3-4 4-9 2-16z" fill="#fff" opacity=".92" />
          </svg>
          通达信金融终端
        </Title>
        <Menu $gap={36}>
          {["行情", "市场", "资讯", "数据", "专题", "发现", "交易", "行业", "热点"].map((t) => (
            <MenuItem key={t} $dot={t === "发现"}>{t}</MenuItem>
          ))}
          <MenuItem><Mono>L1L2</Mono></MenuItem>
        </Menu>
        <Notice>
          <span>交易未登录</span>
          <span>北化股份</span>
        </Notice>
        <Menu $gap={21}>
          {["功能", "版面", "公式", "选项", "帮助"].map((t) => (
            <MenuItem key={t}>{t}</MenuItem>
          ))}
        </Menu>
        <Clock>
          <Mono>13:22:58</Mono>
          <span>周二</span>
        </Clock>
        <WindowButtons>
          {["M14 4L7 11l7 8", "M4 11h14", "M3 9h11v9H3zM7 9V4h11v10h-4", "M4 4l14 14M18 4L4 18"].map((d, i) => (
            <button key={d} aria-label={["后退", "最小化", "还原", "关闭"][i]}>
              <svg width="22" height="22" viewBox="0 0 22 22">
                <path d={d} fill="none" stroke="#333" strokeWidth="2.8" />
              </svg>
            </button>
          ))}
        </WindowButtons>
      </MenuBar>

      <Body>
        <Main>
          <Toolbar>
            <PaneToggle aria-label="侧栏"><PaneIcon /></PaneToggle>
            <Periods>
              {["分时", "1分钟", "5分钟", "15分钟", "30分钟", "60分钟", "日线", "周线", "月线", "多周期"].map((t) => (
                <Period key={t} $on={t === "日线"}>{t}</Period>
              ))}
              <Period>
                更多
                <svg width="8" height="16" viewBox="0 0 8 16"><path d="M1 2l6 6-6 6" fill="none" stroke={GREY} strokeWidth="1.5" /></svg>
              </Period>
            </Periods>
            <Tools>
              {["复权", "叠加", "统计", "画线", "F10", "标记", "-自选", "返回"].map((t) => (
                <button key={t}>{t}</button>
              ))}
            </Tools>
          </Toolbar>

          <Pane $h={714}>
            <Canvas>
              <Plot viewBox="0 67 1709 714" preserveAspectRatio="none">
                <Grid ys={dayGrid} />
                <rect x="540" y="644" width="1080" height="110" fill="#000" />
                <rect x="1361" y="505" width="348" height="5" fill="#808080" />
                <g stroke="#c0c0c0" strokeWidth="1.4" fill="none">
                  <path d="M4 110V97l5 0M7 98l15 7" />
                  <path d="M246 750h-17M235 745l-6 5 6 5" />
                </g>
                <Candles data={dayCandles} />
                <Lines data={dayLines} />
              </Plot>
              <Legend $h={28}>
                <LegendName>北化股份(日线)<Drop /></LegendName>
                <LegendItem $c="#fff">MA5: 10.07<Arrow up /></LegendItem>
                <LegendItem $c={Y}>MA10: 9.98<Arrow /></LegendItem>
                <LegendItem $c="#e600e6">MA20: 10.22<Arrow /></LegendItem>
                <LegendItem $c={GREEN}>MA60: 9.51<Arrow up /></LegendItem>
                <LegendItem $c={GREY}>MA120: 9.14<Arrow up /></LegendItem>
                <LegendItem $c="#0000e6">MA250: 9.09<Arrow up /></LegendItem>
                <Corner>
                  <svg width="16" height="18" viewBox="0 0 16 18"><path d="M8 1l7 8-7 8-7-8z" fill="none" stroke="#777" /></svg>
                  <PaneIcon />
                </Corner>
              </Legend>
              <Pin $x={1.5} $y={4}>12.78</Pin>
              <Pin $x={14.5} $y={94.4}>7.41</Pin>
              <Pin $x={79.8} $y={62.8}>9.38 - 9.43</Pin>
              <Pin $x={71.05} $y={97} $bg="#008000">减</Pin>
              <Pin $x={86.65} $y={97} $bg="#804000">榜</Pin>
              <Pin $x={93.2} $y={97} $bg="#003878">财</Pin>
              <Pin $x={46.2} $y={96.6}>
                <svg width="12" height="20" viewBox="0 0 12 20">
                  <path d="M2 6l4-4 4 4z" fill="#f00" />
                  <text x="6" y="18" fontSize="15" fontWeight="bold" textAnchor="middle" fill="#f00">S</text>
                </svg>
              </Pin>
            </Canvas>
            <Axis $top={56} $bottom={32}>
              <Ticks ys={dayGrid} view="0 67 10 714" />
              <ol>
                {["12.50", "12.00", "11.50", "11.00", "10.50", "10.00", "9.50", "9.00", "8.50", "8.00", "7.50"].map((t) => (
                  <li key={t}>{t}</li>
                ))}
              </ol>
              <CursorPrice>10.47</CursorPrice>
            </Axis>
          </Pane>

          <Pane $h={501} $line>
            <Canvas>
              <Overlay>
                <Legend $h={24}>
                  <LegendName $w={298}><Drop />行业板块看盘1</LegendName>
                  <LegendItem $c={GREEN}>MA5: 1337.00<Arrow up /></LegendItem>
                  <LegendItem $c="#b0b0b0">MA10: 1748.13<Arrow up /></LegendItem>
                  <LegendItem $c="#0000e6">MA20: 2001.19<Arrow up /></LegendItem>
                  <LegendItem $c="#f0f0f0">MA60: 2290.23<Arrow /></LegendItem>
                </Legend>
                <StatGrid>
                  {stats.map(([t, c], i) => (
                    <Cell key={i} $c={c} $fill={i === 9}>{t}</Cell>
                  ))}
                </StatGrid>
                <Notes>
                  <Advice>
                    {advice.map((t) => (
                      <div key={t}>{t}</div>
                    ))}
                  </Advice>
                  <Holder as="div" $c={G}>股东统计分析：</Holder>
                  <div>
                    {holders.map(([t, c], i) => (
                      <Holder key={i} $c={c}>{t}</Holder>
                    ))}
                  </div>
                </Notes>
              </Overlay>
              <Plot viewBox="0 783 1709 499" preserveAspectRatio="none">
                <Grid ys={sectorGrid} />
                <Candles data={sectorCandles} />
                <Lines data={sectorLines} />
                <path d="M1646 1273h6M1656 1273h6" stroke="#fff" strokeWidth="1.5" />
              </Plot>
              <Ime>
                <ImeKey $latin>A</ImeKey>
                <ImeKey $grow={4}>极品五笔</ImeKey>
                <ImeKey aria-label="半角"><svg width="12" height="14" viewBox="0 0 12 14"><path d="M7 0a7 7 0 1 1-7 10 6 6 0 0 0 7-10z" /></svg></ImeKey>
                <ImeKey>·,</ImeKey>
                <ImeKey aria-label="软键盘"><svg width="16" height="12" viewBox="0 0 16 12"><rect width="16" height="12" fill="#888" /><path d="M1 3h14M1 6h14M1 9h14" stroke="#fff" strokeWidth="2" strokeDasharray="2 1" /></svg></ImeKey>
              </Ime>
            </Canvas>
            <Axis $top={48} $bottom={84} $frame>
              <Ticks ys={sectorGrid} view="0 783 10 499" />
              <ol>
                {["2500", "2250", "2000", "1750", "1500", "1250", "1000", "750.0", "500.0"].map((t) => (
                  <li key={t}>{t}</li>
                ))}
              </ol>
            </Axis>
          </Pane>

          <DateAxis>
            <DateMark $x={0.1}>2022年</DateMark>
            <DateMark $x={14.6} $line>5</DateMark>
            <DateMark $x={26.5} $line>6</DateMark>
            <DateMark $x={39.6} $line>7</DateMark>
            <DateMark $x={52.7} $line>8</DateMark>
            <DateMark $x={31.5} $box>2022/06/14/二</DateMark>
            {[5.7, 8.7, 11.7, 17.6, 20.6, 23.5, 29.7, 42.9, 46.2, 49.5, 56.4, 60, 63.5, 67].map((x) => (
              <Tick key={x} $x={x} />
            ))}
          </DateAxis>
          <Tabs $h={26}>
            {["指标", "窗口", "MACD", "VOL-TDX", "CCI", "趋势动力", "主力监控", "私募主图", "MA2", "测试主图", "测试幅图A", "测试幅图B", "更多"].map((t) => (
              <Tab key={t}>{t}</Tab>
            ))}
            <Tab $c={CYAN}>设置</Tab>
          </Tabs>
          <Tabs $h={27}>
            {["扩展∧", "关联报价", "资金分布", "综合资讯", "行业资讯", "互动问答", "新用户福利专享"].map((t, i) => (
              <Tab key={t} $c={i > 2 && i < 6 ? "#d8d800" : undefined}>{t}</Tab>
            ))}
          </Tabs>
        </Main>

        <Quote>
          <Head>
            <Name>
              <strong>北化股份</strong>
              <b>002246</b>
              <sup>R</sup>
            </Name>
            <Price>
              <span>10.30</span>
              <span>
                <svg width="20" height="19" viewBox="0 0 20 19"><path d="M10 0l10 19H0z" fill={RED} /></svg>
                0.16
              </span>
              <span>1.58%</span>
            </Price>
          </Head>
          <Block $pad={1}>
            <DepthTable rows={sells} />
            <Balance />
            <DepthTable rows={buys} />
          </Block>
          <Block $pad={0}>
            <Stats $gap={1}>
              <StatPair a={["今开", "10.14", "#fff"]} b={["均价", "10.08", GREEN]} />
              <StatPair a={["最高", "10.50", RED]} b={["量比", "1.99", RED]} />
              <StatPair a={["最低", "9.71", GREEN]} b={["市值", "56.6", GREY, "亿"]} />
              <StatPair a={["现量", "52", RED]} b={["总量", "317546"]} />
              <StatPair a={["外盘", "170241", RED]} b={["内盘", "147305", GREEN]} />
            </Stats>
          </Block>
          <Block $pad={4}>
            <Stats $gap={1}>
              <StatPair a={["换手", "5.78%"]} b={["股本", "5.49", GREY, "亿"]} />
              <StatPair a={["净资", "5.19"]} b={["流通", "5.49", GREY, "亿"]} />
              <StatPair a={["收益㈢", "0.159"]} b={["PE(动)", "48.5"]} />
            </Stats>
          </Block>
          <Block $top={2} $pad={4}>
            <Stats $gap={0}>
              {([["净流入额", 21, "2364", "7%"], ["大宗流入", 17, "1976", "6%"], ["5日净流入额", 14, "1541", "1%"], ["5日大宗流入", 36, "3957", "3%"]] as [string, number, string, string][]).map(([n, w, v, p]) => (
                <FlowRow key={n}>
                  <span>{n[0] === "5" ? <><Small>5</Small>{n.slice(1)}</> : n}</span>
                  <Bar style={{ width: w }} />
                  <Value as="span" $c={RED}>{v}<i>万</i></Value>
                  <Value as="span" $c={RED}>{p}</Value>
                </FlowRow>
              ))}
            </Stats>
          </Block>
          <Block $pad={0}>
            <table>
              <colgroup>
                <Col $w={70} />
                <Col $w={85} />
                <Col $w={94} />
                <Col $w={35} />
                <Col />
              </colgroup>
              <tbody>
                {trades.map(([t, p, v, s, n], i) => (
                  <Row key={i} $h={27}>
                    <Num as="th" scope="row" $left>{t}</Num>
                    <Num $c={RED}>{p}</Num>
                    <Num $c={YELLOW}>{v}<i>万</i></Num>
                    <Side $c={s === "B" ? RED : GREEN}>{s}</Side>
                    <Num $c="#808080">{n}</Num>
                  </Row>
                ))}
              </tbody>
            </table>
          </Block>
        </Quote>

        <Rail>
          <RailGroup $h={482}>
            {topTools.map(([n, icon]) => (
              <RailButton key={n} aria-label={n}>{icon}</RailButton>
            ))}
          </RailGroup>
          <RailSep />
          <RailGroup $h={172}>
            {midTools.map(([n, icon]) => (
              <RailButton key={n} aria-label={n}>{icon}</RailButton>
            ))}
          </RailGroup>
          <RailSep />
          <RailGroup $h={482}>
            {lowTools.map(([n, icon]) => (
              <RailButton key={n} aria-label={n} $on={n === "日"}>{icon}</RailButton>
            ))}
          </RailGroup>
        </Rail>
      </Body>

      <Status>
        <svg width="20" height="20" viewBox="0 0 20 20">
          <rect x="1" y="1" width="18" height="18" rx="2" fill="#ffd060" stroke="#e09010" strokeWidth="2" />
          <rect x="5" y="5" width="10" height="10" fill="#fff3c0" />
          <rect x="7" y="7" width="7" height="7" fill="#f0a020" />
        </svg>
        {[["上证", "3055.83", "-21.99", "-0.71%", "2362"], ["沪深", "3735.80", "-39.50", "-1.05%", "1304"], ["创业", "2420.85", "-33.84"]].map(([n, a, b, c, d]) => (
          <Index key={n}>
            <span>{n}</span>
            <span>{a}</span>
            <span>{b}</span>
            {c && <span>{c}</span>}
            {d && <em>{d}<i>亿</i></em>}
          </Index>
        ))}
      </Status>

      <Banner>
        <BannerName>公式指标网</BannerName>
        <Coin />
        <BannerUrl href="#">www.9m8.cn</BannerUrl>
      </Banner>
    </Page>
  );
}
